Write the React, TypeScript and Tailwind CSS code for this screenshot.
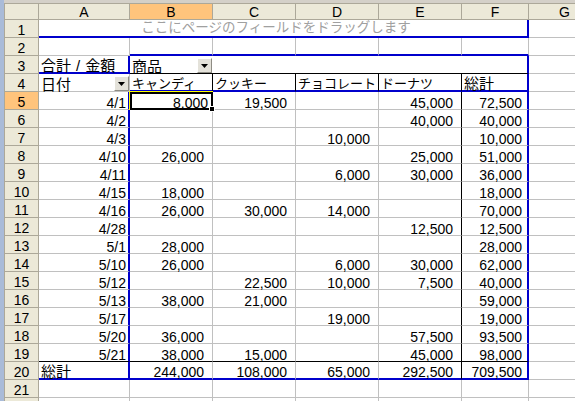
import React from 'react'

const RB: Record<string, string> = {
  g: 'border-r border-r-[#c0c0c0]',
  k: 'border-r border-r-black',
  b: 'border-r-2 border-r-[#0000cc]',
  n: '',
}
const BB: Record<string, string> = {
  g: 'border-b border-b-[#c0c0c0]',
  k: 'border-b border-b-black',
  b: 'border-b-2 border-b-[#0000cc]',
  n: '',
}

const dates = ['4/1', '4/2', '4/3', '4/10', '4/11', '4/15', '4/16', '4/28', '5/1', '5/10', '5/12', '5/13', '5/17', '5/20', '5/21']
const vals = [
  ['8,000', '19,500', '', '45,000', '72,500'],
  ['', '', '', '40,000', '40,000'],
  ['', '', '10,000', '', '10,000'],
  ['26,000', '', '', '25,000', '51,000'],
  ['', '', '6,000', '30,000', '36,000'],
  ['18,000', '', '', '', '18,000'],
  ['26,000', '30,000', '14,000', '', '70,000'],
  ['', '', '', '12,500', '12,500'],
  ['28,000', '', '', '', '28,000'],
  ['26,000', '', '6,000', '30,000', '62,000'],
  ['', '22,500', '10,000', '7,500', '40,000'],
  ['38,000', '21,000', '', '', '59,000'],
  ['', '', '19,000', '', '19,000'],
  ['36,000', '', '', '57,500', '93,500'],
  ['38,000', '15,000', '', '45,000', '98,000'],
]
const totals = ['244,000', '108,000', '65,000', '292,500', '709,500']

function C({ r = 'g', b = 'g', className = '', children }: { r?: string; b?: string; className?: string; children?: React.ReactNode }) {
  return <div className={`${RB[r]} ${BB[b]} relative flex items-end min-w-0 leading-[12px] ${className}`}>{children}</div>
}

function RowHead({ n, sel = false }: { n?: number; sel?: boolean }) {
  return (
    <div className={`border-l border-r border-b border-[#aca899] flex items-end justify-center leading-[12px] pb-px ${sel ? 'bg-[#ffc47c]' : 'bg-[#ece9d8]'}`}>
      {n}
    </div>
  )
}

function Drop() {
  return (
    <span className="ml-auto w-[15px] h-[15px] shrink-0 flex items-center justify-center bg-[#e4e2da] border border-t-white border-l-white border-r-[#8e8c84] border-b-[#8e8c84]">
      <svg width="7" height="4" viewBox="0 0 7 4">
        <path d="M0 0h7L3.5 4z" fill="#000" />
      </svg>
    </span>
  )
}

export default function App() {
  const cols = ['A', 'B', 'C', 'D', 'E', 'F', 'G']
  return (
    <div className="w-[575px] h-[401px] overflow-hidden bg-[#d4d0c8] flex font-['Liberation_Sans','Noto_Sans_CJK_JP',sans-serif] text-[14px] text-black">
      <div className="w-[4px] shrink-0 bg-[#a9bbd8]" />
      <div className="pt-[3px]">
        <div className="grid grid-cols-[35px_91px_83px_83px_83px_83px_67px_72px] grid-rows-[17px] auto-rows-[18px] bg-white">
          {/* column headers */}
          <div className="border-t border-l border-r border-b border-[#aca899] bg-[#ece9d8]" />
          {cols.map((c) => (
            <div
              key={c}
              className={`border-t border-r border-b border-[#aca899] flex items-end justify-center leading-[12px] pb-px ${c === 'B' ? 'bg-[#ffc47c]' : 'bg-[#ece9d8]'}`}
            >
              {c}
            </div>
          ))}

          {/* row 1: page field area */}
          <RowHead n={1} />
          <C r="b" b="b" className="col-span-6 !items-center justify-center pr-[14px] text-[13.5px] text-[#a0a0a0]">
            ここにページのフィールドをドラッグします
          </C>
          <C />

          {/* row 2 */}
          <RowHead n={2} />
          <C />
          <C b="b" />
          <C b="b" />
          <C b="b" />
          <C b="b" />
          <C b="b" />
          <C />

          {/* row 3 */}
          <RowHead n={3} />
          <C r="b" b="b" className="pl-[2px] text-[15px]">
            <span>合計</span>
            <span className="px-[5px]">/</span>
            <span>金額</span>
          </C>
          <C r="n" b="k" className="pl-[2px] pr-px text-[15px]">
            <span>商品</span>
            <Drop />
          </C>
          <C r="n" b="k" />
          <C r="n" b="k" />
          <C r="n" b="k" />
          <C r="b" b="k" />
          <C />

          {/* row 4 */}
          <RowHead n={4} />
          <C className="pl-[2px] text-[15px]">
            <span>日付</span>
            <Drop />
          </C>
          <C r="k" b="b" className="pl-[2px] text-[13px]">キャンディ</C>
          <C r="k" b="b" className="pl-[2px] text-[13px]">クッキー</C>
          <C r="k" b="b" className="pl-[2px] text-[13px]">チョコレート</C>
          <C r="k" b="b" className="pl-[2px] text-[13px]">ドーナツ</C>
          <C r="b" b="b" className="pl-[2px] text-[15px]">総計</C>
          <C />

          {/* rows 5-19 */}
          {dates.map((d, i) => {
            const last = i === dates.length - 1
            const bb = last ? 'k' : 'g'
            const v = vals[i]
            return (
              <React.Fragment key={d}>
                <RowHead n={i + 5} sel={i === 0} />
                <C r="b" b={bb} className="justify-end pr-[2px]">{d}</C>
                <C b={bb} className={`justify-end ${i === 0 ? 'pr-[4px]' : 'pr-[8px]'}`}>
                  {v[0]}
                  {i === 0 && (
                    <>
                      <div className="absolute left-0 top-0 -right-px -bottom-px border-2 border-black pointer-events-none" />
                      <div className="absolute -left-px -top-px -right-px h-px bg-[#ffff00]" />
                      <div className="absolute -left-px -top-px w-px -bottom-px bg-[#ffff00]" />
                      <div className="absolute -right-[3px] -bottom-[3px] w-[6px] h-[6px] bg-black border border-white z-10" />
                    </>
                  )}
                </C>
                <C b={bb} className="justify-end pr-[8px]">{v[1]}</C>
                <C b={bb} className="justify-end pr-[8px]">{v[2]}</C>
                <C r="k" b={bb} className="justify-end pr-[8px]">{v[3]}</C>
                <C r="b" b={bb} className="justify-end pr-[5px]">{v[4]}</C>
                <C />
              </React.Fragment>
            )
          })}

          {/* row 20 totals */}
          <RowHead n={20} />
          <C r="b" b="b" className="pl-[2px] text-[15px]">総計</C>
          <C b="b" className="justify-end pr-[8px]">{totals[0]}</C>
          <C b="b" className="justify-end pr-[8px]">{totals[1]}</C>
          <C b="b" className="justify-end pr-[8px]">{totals[2]}</C>
          <C r="k" b="b" className="justify-end pr-[8px]">{totals[3]}</C>
          <C r="b" b="b" className="justify-end pr-[5px]">{totals[4]}</C>
          <C />

          {/* row 21 + the sliver of row 22 at the bottom edge */}
          {[21, 0].map((n) => (
            <React.Fragment key={n}>
              <RowHead n={n || undefined} />
              <C />
              <C />
              <C />
              <C />
              <C />
              <C />
              <C />
            </React.Fragment>
          ))}
        </div>
      </div>
    </div>
  )
}
